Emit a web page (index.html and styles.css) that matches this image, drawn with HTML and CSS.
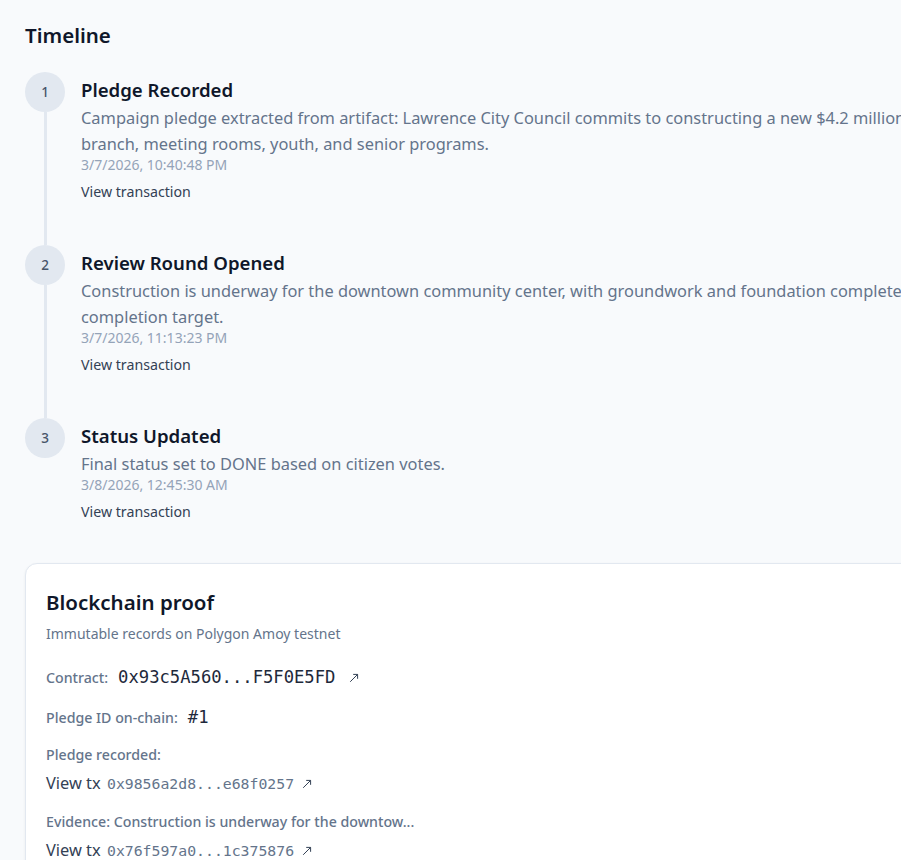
FILE: index.html
```html
<!DOCTYPE html>
<html lang="en">
<head>
<meta charset="utf-8">
<title>Pledge timeline</title>
<link rel="stylesheet" href="styles.css">
</head>
<body>
<main class="page">
  <h2 class="section-title">Timeline</h2>
  <ol class="timeline">
    <li class="event">
      <div class="rail"><span class="step">1</span><span class="line"></span></div>
      <div class="event-body">
        <h3 class="event-title">Pledge Recorded</h3>
        <p class="event-desc">Campaign pledge extracted from artifact: Lawrence City Council commits to constructing a new $4.2 million library branch, meeting rooms, youth, and senior programs.</p>
        <time class="event-date">3/7/2026, 10:40:48 PM</time>
        <a class="event-link" href="#">View transaction</a>
      </div>
    </li>
    <li class="event">
      <div class="rail"><span class="step">2</span><span class="line"></span></div>
      <div class="event-body">
        <h3 class="event-title">Review Round Opened</h3>
        <p class="event-desc">Construction is underway for the downtown community center, with groundwork and foundation complete, on completion target.</p>
        <time class="event-date">3/7/2026, 11:13:23 PM</time>
        <a class="event-link" href="#">View transaction</a>
      </div>
    </li>
    <li class="event">
      <div class="rail"><span class="step">3</span></div>
      <div class="event-body">
        <h3 class="event-title">Status Updated</h3>
        <p class="event-desc">Final status set to DONE based on citizen votes.</p>
        <time class="event-date">3/8/2026, 12:45:30 AM</time>
        <a class="event-link" href="#">View transaction</a>
      </div>
    </li>
  </ol>

  <section class="card">
    <h2 class="card-title">Blockchain proof</h2>
    <p class="card-sub">Immutable records on Polygon Amoy testnet</p>
    <div class="proof-list">
      <div class="proof-row">
        <span class="proof-label">Contract:</span>
        <a class="hash hash-lg" href="#">0x93c5A560...F5F0E5FD<svg class="ext ext-lg" viewBox="0 0 10 10" width="10" height="10"><path d="M1.2 8.8 L8.6 1.4 M4.2 1.4 H8.6 V5.8" fill="none" stroke="#334155" stroke-width="1"/></svg></a>
      </div>
      <div class="proof-row">
        <span class="proof-label">Pledge ID on-chain:</span>
        <span class="hash hash-lg">#1</span>
      </div>
      <div class="proof-group">
        <span class="proof-label">Pledge recorded:</span>
        <a class="tx-link" href="#">View tx <span class="hash hash-sm">0x9856a2d8...e68f0257</span><svg class="ext" viewBox="0 0 10 10" width="10" height="10"><path d="M1.2 8.8 L8.6 1.4 M4.2 1.4 H8.6 V5.8" fill="none" stroke="#334155" stroke-width="1"/></svg></a>
      </div>
      <div class="proof-group">
        <span class="proof-label">Evidence: Construction is underway for the downtow...</span>
        <a class="tx-link" href="#">View tx <span class="hash hash-sm">0x76f597a0...1c375876</span><svg class="ext" viewBox="0 0 10 10" width="10" height="10"><path d="M1.2 8.8 L8.6 1.4 M4.2 1.4 H8.6 V5.8" fill="none" stroke="#334155" stroke-width="1"/></svg></a>
      </div>
    </div>
  </section>
</main>
</body>
</html>
```
FILE: styles.css
```css
html {
  overflow: hidden;
}
body {
  margin: 0;
  background: #f8fafc;
  font-family: "Noto Sans", "Open Sans", sans-serif;
  color: #0f172a;
}
.page {
  width: 961px;
  padding: 20px 0 0 25px;
}
.section-title {
  margin: 0;
  font-size: 20.5px;
  line-height: 30px;
  font-weight: 600;
  color: #0f172a;
}
.timeline {
  list-style: none;
  margin: 22px 0 0;
  padding: 0;
}
.event {
  display: flex;
  gap: 16px;
}
.rail {
  width: 40px;
  flex: none;
  display: flex;
  flex-direction: column;
  align-items: center;
}
.step {
  width: 40px;
  height: 40px;
  border-radius: 50%;
  background: #e2e8f0;
  color: #475569;
  font-size: 13.5px;
  font-weight: 500;
  display: flex;
  align-items: center;
  justify-content: center;
  flex: none;
}
.line {
  flex: 1;
  width: 3px;
  background: #e2e8f0;
}
.event-body {
  flex: 1;
  min-width: 0;
  padding: 4px 0 43px;
  display: flex;
  flex-direction: column;
  align-items: flex-start;
}
.event:last-child .event-body {
  padding-bottom: 41px;
}
.event-title {
  margin: 0;
  font-size: 18.6px;
  line-height: 28px;
  font-weight: 600;
  color: #0f172a;
}
.event-desc {
  margin: 1px 0 0;
  font-size: 16.4px;
  line-height: 26px;
  color: #64748b;
}
.event-date {
  font-size: 14px;
  line-height: 16px;
  color: #94a3b8;
}
.event-link {
  margin-top: 9px;
  font-size: 14.2px;
  line-height: 20px;
  color: #334155;
  text-decoration: none;
}
.card {
  background: #ffffff;
  border: 1px solid #e2e8f0;
  border-radius: 12px;
  box-shadow: 0 1px 3px rgba(15, 23, 42, 0.06);
  padding: 24px 20px 40px;
}
.card-title {
  margin: 0;
  font-size: 20.5px;
  line-height: 28px;
  font-weight: 600;
  color: #0f172a;
}
.card-sub {
  margin: 8px 0 0;
  font-size: 14px;
  line-height: 20px;
  color: #64748b;
}
.proof-list {
  margin-top: 21px;
  display: flex;
  flex-direction: column;
  gap: 16px;
}
.proof-row {
  display: flex;
  align-items: baseline;
  gap: 10px;
  line-height: 24px;
}
.proof-group {
  display: flex;
  flex-direction: column;
  align-items: flex-start;
  gap: 6px;
}
.proof-label {
  font-size: 14.2px;
  line-height: 20px;
  font-weight: 500;
  color: #64748b;
}
.hash {
  font-family: "DejaVu Sans Mono", "Liberation Mono", monospace;
}
.hash-lg {
  font-size: 17.2px;
  color: #1e293b;
  text-decoration: none;
}
.hash-sm {
  font-size: 14.8px;
  color: #64748b;
  margin-left: 2px;
}
.tx-link {
  font-size: 16.4px;
  line-height: 24px;
  color: #334155;
  text-decoration: none;
}
.ext {
  margin-left: 8px;
  vertical-align: 0;
}
.ext-lg {
  margin-left: 14px;
}
```
